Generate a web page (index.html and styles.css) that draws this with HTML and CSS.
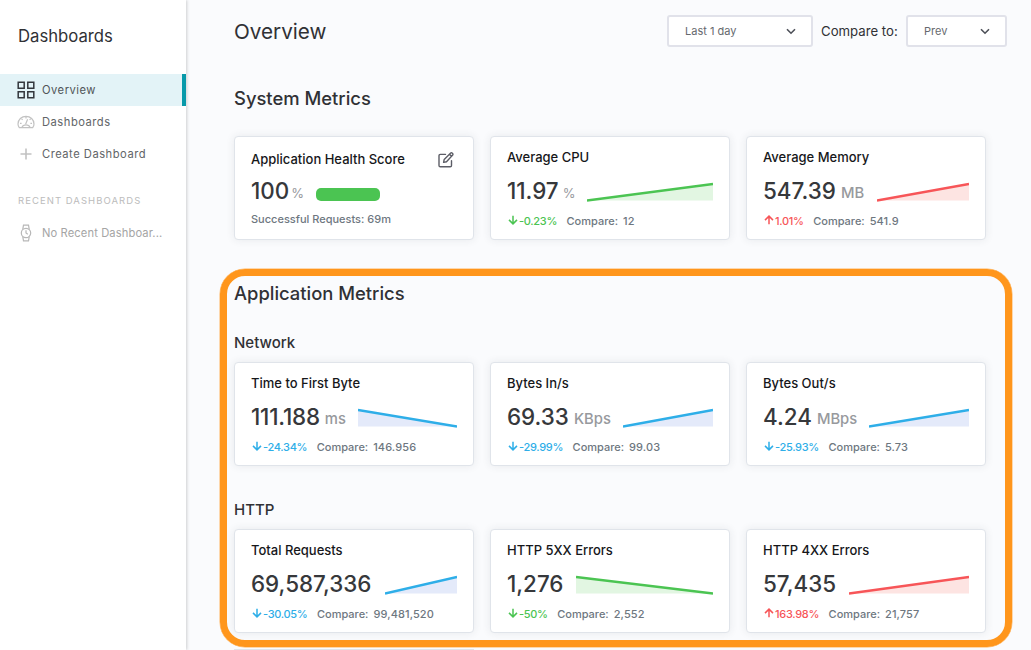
FILE: index.html
```html
<!DOCTYPE html>
<html lang="en">
<head>
<meta charset="utf-8">
<title>Overview</title>
<link rel="stylesheet" href="styles.css">
</head>
<body>
<svg width="0" height="0" class="defs">
  <symbol id="down" viewBox="0 0 10 10"><path d="M5 .8v8M1 4.9l4 4 4-4" fill="none" stroke="currentColor" stroke-width="1.5"/></symbol>
  <symbol id="up" viewBox="0 0 10 10"><path d="M5 9.2v-8M1 5.1l4-4 4 4" fill="none" stroke="currentColor" stroke-width="1.5"/></symbol>
  <symbol id="chevron" viewBox="0 0 10 7"><path d="M1 1.2l4 4 4-4" fill="none" stroke="#4d5058" stroke-width="1.6"/></symbol>
  <symbol id="rise" viewBox="0 0 100 20" preserveAspectRatio="none"><path class="area" d="M0 18.5L100 2V18.5z"/><path class="line" d="M0 18.5L100 2"/></symbol>
  <symbol id="fall" viewBox="0 0 100 20" preserveAspectRatio="none"><path class="area" d="M0 2L100 18.5H0z"/><path class="line" d="M0 2L100 18.5"/></symbol>
</svg>
<aside class="sidebar">
  <h2 class="side-title">Dashboards</h2>
  <nav>
    <a class="nav-item active"><svg class="nav-icon" viewBox="0 0 18 18" fill="none" stroke="#33363c" stroke-width="1.5"><path d="M1.2 1.2h6v6h-6zM10.8 1.2h6v6h-6zM1.2 10.8h6v6h-6zM10.8 10.8h6v6h-6z"/></svg>Overview</a>
    <a class="nav-item"><svg class="nav-icon" viewBox="0 0 18 18" fill="none" stroke="#c2c2c2" stroke-width="1.2"><path d="M2.3 14.6Q1 13 1 11a8 7.7 0 0 1 16 0q0 2-1.3 3.6zM5 14.3a4.2 3.4 0 0 1 8 0M8.6 11.2l2-5M9 3.6v1.8M4.6 5.8l1 1M13.6 5.8l-1 1M3 10.4h1.6M13.4 10.4H15"/></svg>Dashboards</a>
    <a class="nav-item"><svg class="nav-icon" viewBox="0 0 18 18" fill="none" stroke="#c2c2c2" stroke-width="1.6"><path d="M9 3.5v11M3.5 9h11"/></svg>Create Dashboard</a>
  </nav>
  <h3 class="side-label">RECENT DASHBOARDS</h3>
  <div class="nav-item muted"><svg class="nav-icon" viewBox="0 0 18 18" fill="none" stroke="#b8b8b8" stroke-width="1.2"><circle cx="9" cy="9" r="4.7"/><path d="M5.8 5.2l.7-4h5l.7 4M5.8 12.8l.7 4h5l.7-4M9 6.3V9l1.8 1.3"/></svg>No Recent Dashboar...</div>
</aside>
<main class="main">
  <header class="topbar">
    <h1 class="page-title">Overview</h1>
    <div class="select select-range"><span>Last 1 day</span><svg class="chevron"><use href="#chevron"/></svg></div>
    <span class="compare-label">Compare to:</span>
    <div class="select select-prev"><span>Prev</span><svg class="chevron"><use href="#chevron"/></svg></div>
  </header>

  <h2 class="section-title">System Metrics</h2>
  <div class="cards">
    <article class="card health">
      <h4 class="card-title">Application Health Score<svg class="edit" viewBox="0 0 16 16" fill="none" stroke="#5c5d66" stroke-width="1.4" stroke-linejoin="round" stroke-linecap="round"><path d="M7.5 2.4H2.3Q1 2.4 1 3.7v9.8q0 1.3 1.3 1.3h9.9q1.3 0 1.3-1.3V8.8"/><path d="M5.6 10.4l.6-3L12.7 1q.8-.5 1.7.3t.3 1.8L8.5 9.7zM11.5 2.2l2 2"/></svg></h4>
      <div class="reading"><b class="value">100</b><span class="unit pct">%</span><i class="bar"></i></div>
      <div class="foot">Successful Requests: 69m</div>
    </article>
    <article class="card">
      <h4 class="card-title">Average CPU</h4>
      <div class="reading"><b class="value">11.97</b><span class="unit pct">%</span><svg class="spark green" width="126"><use href="#rise"/></svg></div>
      <div class="foot"><span class="delta green"><svg class="arrow"><use href="#down"/></svg>-0.23%</span><span>Compare:</span><span class="prev">12</span></div>
    </article>
    <article class="card">
      <h4 class="card-title">Average Memory</h4>
      <div class="reading"><b class="value">547.39</b><span class="unit">MB</span><svg class="spark red" width="92"><use href="#rise"/></svg></div>
      <div class="foot"><span class="delta red"><svg class="arrow"><use href="#up"/></svg>1.01%</span><span>Compare:</span><span class="prev">541.9</span></div>
    </article>
  </div>

  <h2 class="section-title app-title">Application Metrics</h2>
  <h3 class="group-title">Network</h3>
  <div class="cards">
    <article class="card">
      <h4 class="card-title">Time to First Byte</h4>
      <div class="reading"><b class="value ones">111.188</b><span class="unit">ms</span><svg class="spark blue" width="99"><use href="#fall"/></svg></div>
      <div class="foot"><span class="delta blue"><svg class="arrow"><use href="#down"/></svg>-24.34%</span><span>Compare:</span><span class="prev">146.956</span></div>
    </article>
    <article class="card">
      <h4 class="card-title">Bytes In/s</h4>
      <div class="reading"><b class="value">69.33</b><span class="unit">KBps</span><svg class="spark blue" width="90"><use href="#rise"/></svg></div>
      <div class="foot"><span class="delta blue"><svg class="arrow"><use href="#down"/></svg>-29.99%</span><span>Compare:</span><span class="prev">99.03</span></div>
    </article>
    <article class="card">
      <h4 class="card-title">Bytes Out/s</h4>
      <div class="reading"><b class="value">4.24</b><span class="unit">MBps</span><svg class="spark blue" width="100"><use href="#rise"/></svg></div>
      <div class="foot"><span class="delta blue"><svg class="arrow"><use href="#down"/></svg>-25.93%</span><span>Compare:</span><span class="prev">5.73</span></div>
    </article>
  </div>

  <h3 class="group-title http-title">HTTP</h3>
  <div class="cards">
    <article class="card">
      <h4 class="card-title">Total Requests</h4>
      <div class="reading"><b class="value">69,587,336</b><svg class="spark blue" width="72"><use href="#rise"/></svg></div>
      <div class="foot"><span class="delta blue"><svg class="arrow"><use href="#down"/></svg>-30.05%</span><span>Compare:</span><span class="prev">99,481,520</span></div>
    </article>
    <article class="card">
      <h4 class="card-title">HTTP 5XX Errors</h4>
      <div class="reading"><b class="value">1,276</b><svg class="spark green" width="137"><use href="#fall"/></svg></div>
      <div class="foot"><span class="delta green"><svg class="arrow"><use href="#down"/></svg>-50%</span><span>Compare:</span><span class="prev">2,552</span></div>
    </article>
    <article class="card">
      <h4 class="card-title">HTTP 4XX Errors</h4>
      <div class="reading"><b class="value">57,435</b><svg class="spark red" width="120"><use href="#rise"/></svg></div>
      <div class="foot"><span class="delta red"><svg class="arrow"><use href="#up"/></svg>163.98%</span><span>Compare:</span><span class="prev">21,757</span></div>
    </article>
  </div>
  <div class="next-row"></div>
  <div class="highlight"></div>
</main>
</body>
</html>
```
FILE: styles.css
```css
* { box-sizing: border-box; }
body {
  margin: 0;
  height: 650px;
  display: flex;
  overflow: hidden;
  background: #fafbfd;
  color: #303135;
  font-family: Inter, "Liberation Sans", sans-serif;
}
h1, h2, h3, h4 { margin: 0; font-weight: 500; }
.defs { position: absolute; }

/* Sidebar */
.sidebar {
  width: 186px;
  flex: none;
  background: #fff;
  box-shadow: 1px 0 3px rgba(0, 0, 0, .18);
  z-index: 1;
}
.side-title {
  height: 74px;
  padding: 24px 0 0 18px;
  font-size: 16.7px;
  line-height: 24px;
  font-weight: 400;
}
.nav-item {
  height: 32px;
  padding-left: 17px;
  display: flex;
  align-items: center;
  gap: 7px;
  font-size: 11.2px;
  letter-spacing: .5px;
  color: #626568;
  white-space: nowrap;
}
.nav-item.active { background: #e3f3f7; border-right: 4px solid #0899a9; color: #505558; }
.nav-icon { width: 18px; height: 18px; flex: none; }
.side-label {
  margin: 23px 0 8px 18px;
  font-size: 9.5px;
  line-height: 16px;
  font-weight: 400;
  letter-spacing: 1.05px;
  color: #bcbcbc;
}
.nav-item.muted { color: #a5a5a5; letter-spacing: .1px; }

/* Main column */
.main { position: relative; flex: 1; height: 650px; padding-left: 48px; }
.topbar { height: 62px; display: flex; align-items: center; padding-right: 24px; }
.page-title { font-size: 20.7px; line-height: 28px; font-weight: 400; margin: 2px auto 0 0; }
.select {
  height: 32px;
  border: 2px solid #e1e2ea;
  border-radius: 3px;
  background: #fff;
  display: flex;
  align-items: center;
  justify-content: space-between;
  padding: 0 15px 0 16px;
  font-size: 11px;
  color: #66696e;
}
.select-range { width: 146px; }
.select-prev { width: 101px; }
.chevron { width: 10px; height: 7px; }
.compare-label { width: 93px; padding-left: 8px; font-size: 13.2px; }

.section-title { font-size: 18.4px; line-height: 24px; margin: 24px 0 26px; }
.app-title { margin: 41px 0 0; }
.group-title { font-size: 15px; line-height: 20px; margin: 28px 0 9px; }
.http-title { margin-top: 34px; }
.cards { display: grid; grid-template-columns: repeat(3, 240px); gap: 16px; }
.next-row { width: 240px; height: 1px; margin-top: 16px; background: #e0e4ea; }

/* Cards */
.card {
  height: 104px;
  padding: 11px 16px 0;
  background: #fff;
  border: 1px solid #e0e4ea;
  border-radius: 4px;
  box-shadow: 0 0 8px rgba(40, 50, 70, .09);
}
.card-title {
  display: flex;
  justify-content: space-between;
  font-size: 13px;
  line-height: 18px;
  color: #16171a;
}
.reading {
  height: 26px;
  margin-top: 12px;
  display: flex;
  align-items: baseline;
  line-height: 26px;
}
.value { font-size: 22.4px; font-weight: 500; color: #36383b; letter-spacing: 0; }
.value.ones { letter-spacing: -.2px; }
.unit { position: relative; top: -1px; margin-left: 5px; font-size: 14.8px; font-weight: 500; color: #97999d; }
.unit.pct { top: -1px; font-size: 13px; font-weight: 400; margin-left: 4px; }
.spark { height: 20px; flex: none; margin-left: auto; align-self: flex-start; margin-top: 4px; }
.foot {
  height: 16px;
  margin-top: 9px;
  display: flex;
  align-items: center;
  font-size: 11px;
  font-weight: 500;
  color: #6e777f;
  white-space: nowrap;
}
.delta { display: flex; align-items: center; margin-right: 9.5px; letter-spacing: -.3px; }
.arrow { width: 10px; height: 10px; margin: -2px 1px 0; }
.prev { margin-left: 5px; letter-spacing: .1px; }
.health { padding-top: 13px; }
.health .reading { margin-top: 10px; }
.health .foot { margin-top: 7px; }
.health .unit { margin-left: 2px; }
.edit { width: 16px; height: 16px; margin: 2px 3px 0 0; }
.bar { width: 64px; height: 13px; margin-left: 12px; border-radius: 5px; background: #4bc452; align-self: center; margin-top: 7px; }

.area { stroke: none; }
.line { stroke: currentColor; stroke-width: 2.4; vector-effect: non-scaling-stroke; fill: none; }
.green { color: #4bc452; fill: #e2f6e2; }
.red { color: #f75558; fill: #fde4e2; }
.blue { color: #2eaee8; fill: #e4eafa; }

/* Callout frame drawn over the application metrics */
.highlight {
  position: absolute;
  left: 33.5px;
  top: 269px;
  width: 792px;
  height: 378px;
  border: 7px solid #ff961c;
  border-radius: 25px;
  box-shadow: 0 0 0 .5px #ffb45c;
  pointer-events: none;
}
```
